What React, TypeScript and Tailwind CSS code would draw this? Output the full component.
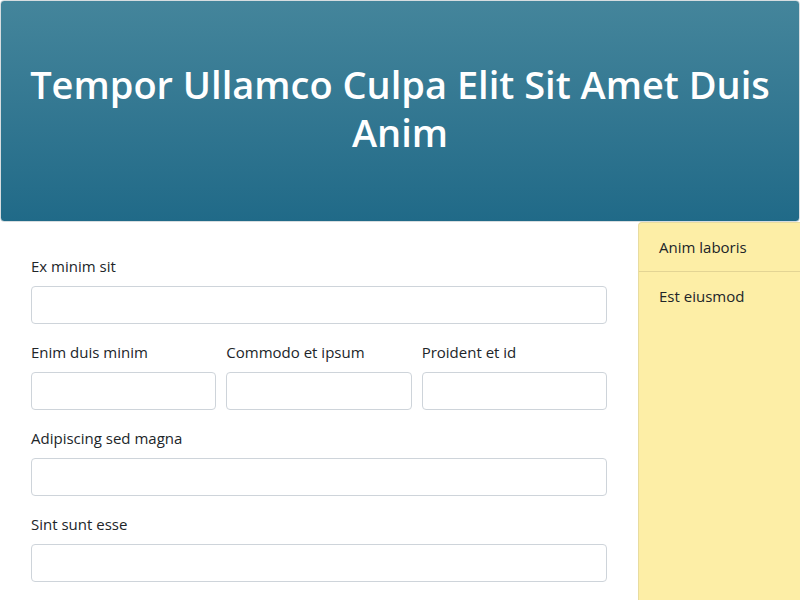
import React from 'react';

const FONT = "font-['Open_Sans','Noto_Sans',sans-serif]";

function Field({ label }: { label: string }) {
  return (
    <div className="flex flex-col">
      <label className="mb-2 text-[15px] leading-6 text-[#212529]">{label}</label>
      <input className="h-[38px] w-full rounded border border-[#ced4da] bg-white px-3" />
    </div>
  );
}

export default function App() {
  return (
    <div className={`${FONT} h-[600px] w-[800px] overflow-hidden bg-white`}>
      {/* Banner */}
      <header className="flex h-[222px] items-center justify-center rounded border border-[#d7dde0] bg-gradient-to-b from-[#44859b] to-[#206a88] px-3 pb-[6px]">
        <h1 className="text-center text-[38px] font-semibold leading-[48px] text-white">
          Tempor Ullamco Culpa Elit Sit Amet Duis Anim
        </h1>
      </header>

      <div className="flex h-[378px]">
        {/* Form */}
        <main className="flex flex-1 flex-col gap-4 px-[31px] pt-8">
          <Field label="Ex minim sit" />
          <div className="grid grid-cols-3 gap-[10px]">
            <Field label="Enim duis minim" />
            <Field label="Commodo et ipsum" />
            <Field label="Proident et id" />
          </div>
          <Field label="Adipiscing sed magna" />
          <Field label="Sint sunt esse" />
        </main>

        {/* Sidebar */}
        <aside className="w-[162px] rounded-tl border-l border-t border-[#e8dca0] bg-[#fdeea6] text-[15px] text-[#212529]">
          <div className="border-b border-[#e3d494] px-5 py-3 leading-6">Anim laboris</div>
          <div className="px-5 py-3 leading-6">Est eiusmod</div>
        </aside>
      </div>
    </div>
  );
}
